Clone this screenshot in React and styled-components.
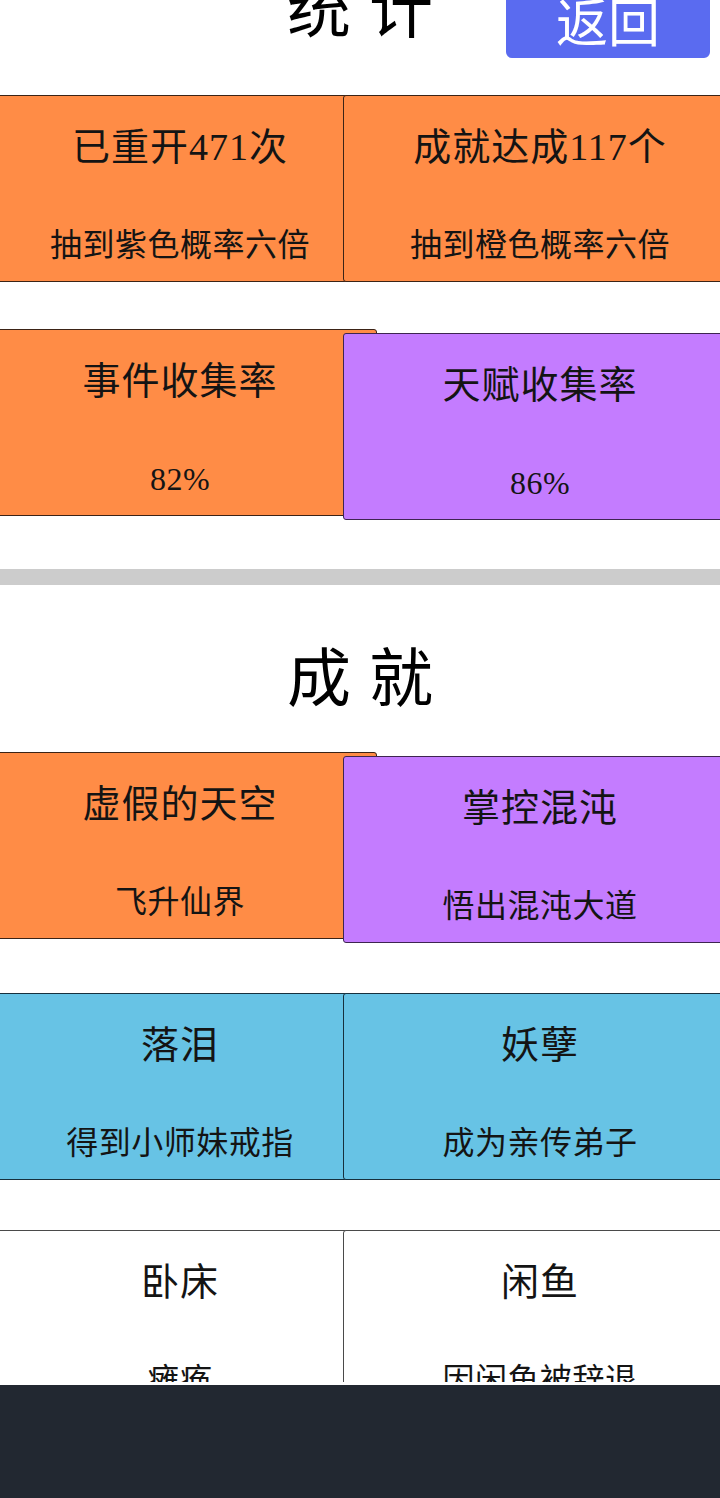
import React, { useLayoutEffect, useRef } from "react";
import styled, { createGlobalStyle, css } from "styled-components";

const GlobalStyle = createGlobalStyle`
  html, body {
    margin: 0;
    padding: 0;
    background: #ffffff;
    overflow: hidden;
  }
  body {
    font-family: "Noto Sans CJK SC", "Noto Sans", sans-serif;
  }
  * { box-sizing: border-box; }
`;

const Page = styled.div`
  display: flex;
  flex-direction: column;
  width: 720px;
  height: 1498px;
  background: #ffffff;
`;

const Scroller = styled.div`
  height: 1382px;
  flex: none;
  overflow-y: auto;
  overflow-x: hidden;
  scrollbar-width: none;
  &::-webkit-scrollbar { display: none; }
`;

const Content = styled.div`
  padding: 25px 0 40px;
`;

const Header = styled.header`
  display: grid;
  grid-template-columns: 1fr auto 1fr;
  align-items: start;
  padding: 0 10px;
`;

const Heading = styled.h1`
  margin: -3px 0 0;
  font-family: "Noto Sans CJK SC", sans-serif;
  font-weight: 400;
  font-size: 64px;
  line-height: 84px;
  letter-spacing: 18px;
  padding-left: 18px;
  color: #000;
  text-align: center;
  white-space: nowrap;
`;

const SectionHeading = styled(Heading)`
  margin: 46px 0 37px;
`;

const BackButton = styled.button`
  grid-column: 3;
  justify-self: end;
  margin-top: 17px;
  height: 76px;
  padding: 0 50px;
  border: none;
  border-radius: 6px;
  background: #5a6bf0;
  color: #ffffff;
  font-family: "Noto Sans CJK SC", sans-serif;
  font-size: 52px;
  line-height: 76px;
  cursor: pointer;
`;

const Grid = styled.section`
  display: grid;
  grid-template-columns: 1fr 1fr;
  align-items: start;
  row-gap: ${(p) => p.$gap}px;
  margin-top: ${(p) => p.$top || 0}px;
`;

const tones = {
  orange: css`
    background: #ff8c46;
    border-color: #3b2316;
  `,
  purple: css`
    background: #c47cff;
    border-color: #3e2550;
    margin-top: 4px;
  `,
  blue: css`
    background: #67c3e5;
    border-color: #17303d;
  `,
  white: css`
    background: #ffffff;
    border-color: #4a4a4a;
  `,
};

const Card = styled.div`
  margin: 0 -17px;
  height: 187px;
  padding: 26px 17px 0;
  border: 1px solid #333;
  border-radius: 3px;
  display: flex;
  flex-direction: column;
  align-items: center;
  color: #141414;
  font-family: "Liberation Serif", "Noto Sans CJK SC", serif;
  ${(p) => tones[p.$tone]}
`;

const CardTitle = styled.div`
  font-size: 38px;
  line-height: 50px;
  letter-spacing: 1px;
  white-space: nowrap;
`;

const CardSub = styled.div`
  margin-top: 48px;
  font-size: 32px;
  line-height: 50px;
  letter-spacing: 0.5px;
  white-space: nowrap;
`;

const Divider = styled.hr`
  margin: 49px 0 0;
  height: 16px;
  border: none;
  background: #cccccc;
`;

const Footer = styled.footer`
  flex: 1;
  border-top: 3px solid #ffffff;
  background: #222831;
`;

const stats = [
  { title: "已重开471次", sub: "抽到紫色概率六倍", tone: "orange" },
  { title: "成就达成117个", sub: "抽到橙色概率六倍", tone: "orange" },
  { title: "事件收集率", sub: "82%", tone: "orange" },
  { title: "天赋收集率", sub: "86%", tone: "purple" },
];

const achievements = [
  { title: "虚假的天空", sub: "飞升仙界", tone: "orange" },
  { title: "掌控混沌", sub: "悟出混沌大道", tone: "purple" },
  { title: "落泪", sub: "得到小师妹戒指", tone: "blue" },
  { title: "妖孽", sub: "成为亲传弟子", tone: "blue" },
  { title: "卧床", sub: "瘫痪", tone: "white" },
  { title: "闲鱼", sub: "因闲鱼被辞退", tone: "white" },
];

function InfoCard({ item }) {
  return (
    <Card $tone={item.tone}>
      <CardTitle>{item.title}</CardTitle>
      <CardSub>{item.sub}</CardSub>
    </Card>
  );
}

export default function App() {
  const ref = useRef(null);
  useLayoutEffect(() => {
    if (ref.current) ref.current.scrollTop = 60;
  }, []);
  return (
    <>
      <GlobalStyle />
      <Page>
        <Scroller ref={ref}>
          <Content>
            <Header>
              <span />
              <Heading>统计</Heading>
              <BackButton>返回</BackButton>
            </Header>
            <Grid $gap={47} $top={37}>
              {stats.map((s) => (
                <InfoCard key={s.title} item={s} />
              ))}
            </Grid>
            <Divider />
            <SectionHeading>成就</SectionHeading>
            <Grid $gap={50}>
              {achievements.map((s) => (
                <InfoCard key={s.title} item={s} />
              ))}
            </Grid>
          </Content>
        </Scroller>
        <Footer />
      </Page>
    </>
  );
}
